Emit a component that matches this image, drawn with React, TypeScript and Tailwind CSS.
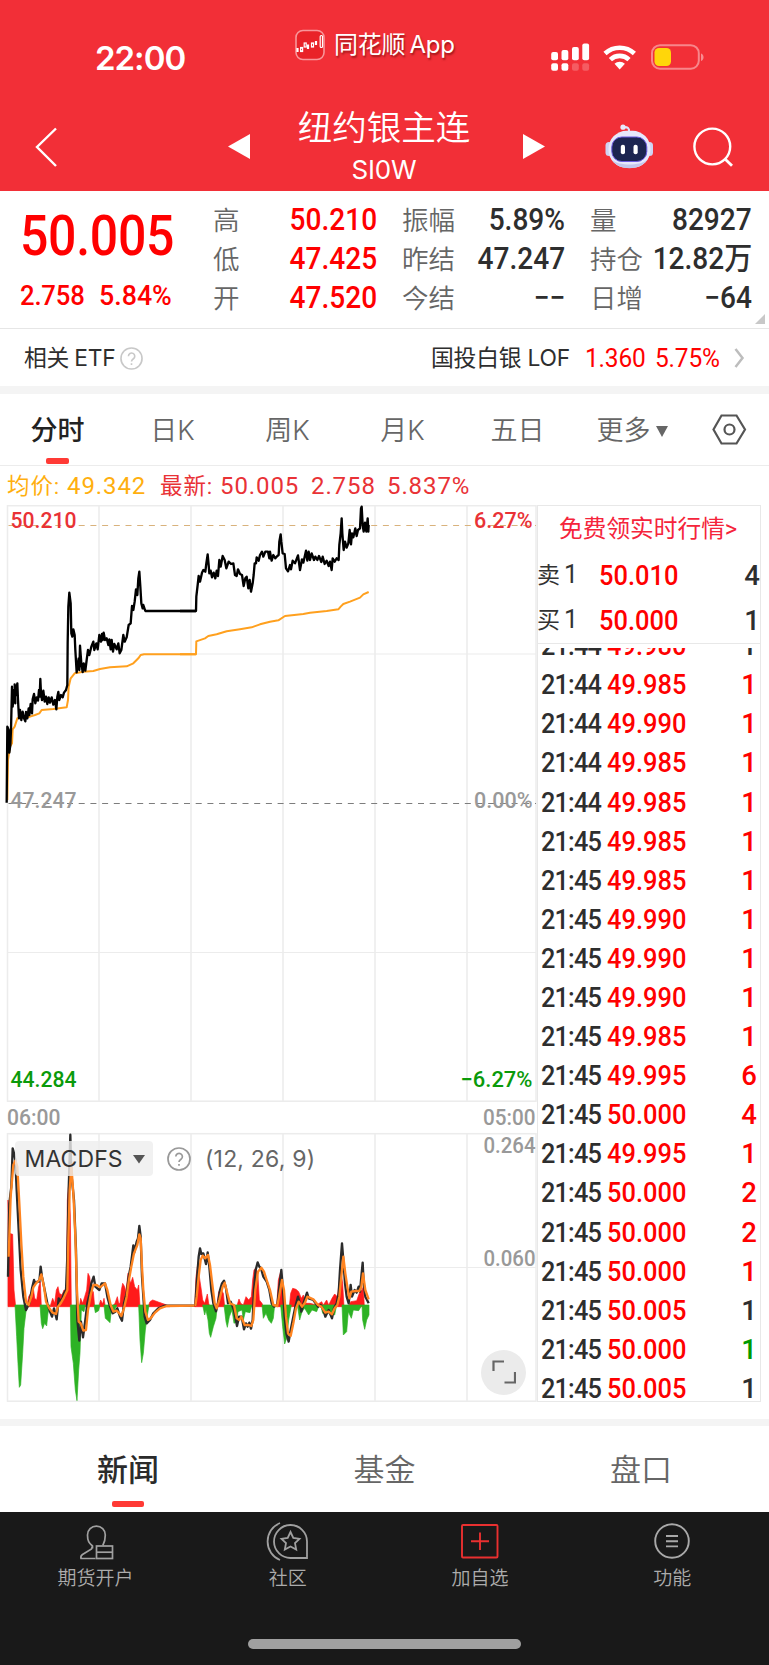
import React from "react";

const num = "font-['Roboto','Noto_Sans_CJK_SC',sans-serif]";

const stats = [
  [["高", "50.210", "red"], ["振幅", "5.89%", ""], ["量", "82927", ""]],
  [["低", "47.425", "red"], ["昨结", "47.247", ""], ["持仓", "12.82万", ""]],
  [["开", "47.520", "red"], ["今结", "−−", ""], ["日增", "−64", ""]],
];

const trades: [string, string, string, string][] = [
  ["21:44", "49.985", "1", "r"],
  ["21:44", "49.990", "1", "r"],
  ["21:44", "49.985", "1", "r"],
  ["21:44", "49.985", "1", "r"],
  ["21:45", "49.985", "1", "r"],
  ["21:45", "49.985", "1", "r"],
  ["21:45", "49.990", "1", "r"],
  ["21:45", "49.990", "1", "r"],
  ["21:45", "49.990", "1", "r"],
  ["21:45", "49.985", "1", "r"],
  ["21:45", "49.995", "6", "r"],
  ["21:45", "50.000", "4", "r"],
  ["21:45", "49.995", "1", "r"],
  ["21:45", "50.000", "2", "r"],
  ["21:45", "50.000", "2", "r"],
  ["21:45", "50.000", "1", "r"],
  ["21:45", "50.005", "1", "k"],
  ["21:45", "50.000", "1", "g"],
  ["21:45", "50.005", "1", "k"],
];

const priceA =
  "20,908 22,680 26,690 28,758 31,735 33,690 36,560 38,620 42,570 46,610 44,553 48,585 52,550 54,600 57,655 60,630 64,660 68,635 72,655 76,664 78,636 82,655 86,625 88,645 92,612 96,640 98,598 102,582 106,610 110,592 114,602 117,570 119,590 121,537 123,580 126,600 130,572 134,605 138,590 142,612 146,592 150,608 155,592 160,614 165,600 169,628 172,590 175,576 178,600 183,585 188,592 192,578 198,570 202,555 203,430 205,320 208,278 212,310 214,400 217,410 220,388 224,405 226,450 230,517 236,475 238,510 240,437 244,490 248,516 251,490 256,512 260,480 264,450 268,465 274,440 280,425 283,450 289,430 293,448 298,405 303,425 306,402 308,420 311,398 315,420 320,415 325,435 328,418 332,448 335,420 339,455 343,432 350,448 355,430 359,460 364,450 370,405 374,425 380,412 386,375 392,370 396,318 400,330 404,305 408,268 412,285 415,235 418,215 421,260 424,310 428,325 430,315 436,333 588,333";
const priceB =
  "0,333 48,333 49,290 53,255 56,228 60,245 66,218 70,210 76,215 79,190 83,163 86,195 88,220 92,212 96,232 101,218 106,235 110,212 114,228 118,180 122,200 128,168 134,180 139,205 146,185 153,192 160,190 165,225 170,228 174,208 180,222 186,225 191,258 196,235 200,230 205,265 209,240 213,275 218,250 221,225 224,190 228,190 230,172 236,182 240,165 246,155 250,170 256,155 264,155 268,175 270,155 275,182 280,165 286,175 292,168 296,165 298,125 302,103 304,125 308,160 314,162 318,205 324,214 330,195 333,208 338,182 345,190 354,166 360,210 366,178 370,188 378,152 382,182 386,155 390,180 395,160 402,180 406,170 412,180 417,168 424,186 428,170 434,192 440,182 446,198 450,185 455,210 458,175 464,185 470,175 476,180 478,135 482,100 485,55 487,100 491,150 495,125 500,143 505,130 509,90 513,133 516,100 520,112 526,85 530,108 534,90 540,85 543,25 545,20 548,75 551,95 555,68 559,95 563,55 565,95 566,75";
const avgA =
  "22,900 24,780 30,740 36,730 38,688 44,680 52,655 90,650 105,645 118,640 125,630 160,627 200,622 204,600 206,560 212,535 224,520 250,515 280,513 300,507 330,502 380,499 400,490 415,475 422,465 432,463 588,463";
const avgB =
  "0,463 48,463 49,424 75,415 85,408 110,403 140,394 180,388 215,382 240,373 270,365 295,361 315,348 370,342 390,338 440,333 475,328 482,320 490,312 510,305 540,293 550,283 566,276";
const difA =
  "24,560 28,340 34,290 38,175 42,190 46,210 50,300 56,420 62,540 70,620 78,660 88,640 96,595 102,570 106,580 112,575 118,575 122,530 126,560 134,600 142,640 150,665 156,680 162,655 170,688 176,625 184,635 192,610 198,600 202,500 206,300 211,134 214,250 222,330 228,480 232,690 238,752 243,695 249,742 256,690 262,640 268,615 274,580 281,560 286,590 292,595 298,600 305,580 315,580 322,620 330,650 338,670 346,665 352,655 360,680 366,692 372,640 380,610 386,560 392,530 400,466 402,490 410,455 414,445 418,408 422,440 426,560 430,620 434,680 440,700 450,690 460,670 475,655 495,647 586,647";
const deaA =
  "26,500 32,320 40,225 46,212 52,230 58,340 64,460 70,560 78,635 86,645 94,620 100,592 108,580 118,570 124,553 132,590 138,635 148,655 158,668 168,672 174,650 182,640 192,622 202,600 205,450 209,300 214,225 220,310 226,440 231,600 236,695 242,700 250,722 258,720 264,660 272,615 280,585 290,585 300,592 315,580 322,600 332,645 340,665 350,662 358,670 364,678 372,655 380,620 386,575 394,530 402,490 412,465 418,433 422,445 426,530 430,600 436,665 444,690 452,685 465,668 480,655 500,648 586,647";
const difB =
  "16,648 20,580 26,500 30,475 34,492 40,490 48,522 53,487 58,530 64,600 70,640 78,664 84,640 90,600 96,580 102,572 108,595 114,640 122,635 132,660 141,708 147,680 155,680 162,718 168,700 173,710 178,698 183,716 188,690 192,600 197,540 203,517 208,530 213,535 220,560 230,575 238,600 245,640 252,650 262,645 268,590 274,540 279,600 284,680 289,730 296,755 302,720 308,690 316,650 324,620 328,635 334,665 342,635 351,608 356,625 370,630 384,650 392,645 400,660 406,680 416,660 426,685 432,655 440,640 446,610 450,540 456,460 460,510 465,580 470,620 476,640 482,585 486,620 494,600 500,608 506,590 510,605 514,560 518,518 521,580 526,620 530,628 536,640";
const deaB =
  "16,648 20,620 26,560 32,510 38,497 46,505 54,495 60,525 66,575 74,640 80,655 88,630 98,590 104,578 112,610 120,640 132,645 140,685 148,690 154,680 164,705 176,705 184,708 190,690 196,600 204,545 214,533 222,545 230,570 240,600 250,645 262,648 268,615 276,570 282,600 288,680 294,730 302,738 310,700 318,655 326,635 336,650 344,640 352,620 370,628 384,645 394,650 406,668 416,665 426,673 434,655 442,645 448,620 454,560 460,500 466,550 472,590 478,625 484,605 496,603 508,603 514,590 519,550 526,600 536,628";
const redA =
  "M24 650V330L28 430 38 433 42 600 47 650ZM80 650L86 620 92 610 96 625 100 595 104 625 110 630 116 590 121 575 124 650ZM150 650L158 625 164 640 169 600 174 590 178 610 186 615 192 600 199 600 202 330 206 280 211 375 214 650ZM238 650L242 625 248 640 254 620 260 600 264 550 269 560 274 600 280 605 284 650ZM296 650L302 630 308 642 312 625 316 650ZM335 650L345 640 352 620 356 640 360 640 364 600 368 580 374 590 378 605 384 550 392 580 398 562 404 590 412 600 416 585 420 650ZM444 650L450 635 458 630 475 636 500 645 510 650Z";
const redB =
  "M14 650L18 560 22 530 28 560 34 600 38 630 44 640 52 612 56 640 60 650ZM80 650L86 605 94 600 100 610 104 650ZM140 650L147 627 152 640 160 645 168 620 176 630 184 620 188 570 192 540 198 533 204 560 208 630 216 640 220 650ZM260 650L265 570 272 545 278 600 282 650ZM298 650L302 610 308 595 318 598 326 605 334 625 340 615 348 640 360 640 380 645 395 635 400 645 410 630 416 645 426 625 434 612 442 620 446 590 452 540 458 580 462 650ZM476 650L482 635 500 632 508 610 516 600 520 590 523 650Z";
const greenA =
  "M45 645L50 740 54 820 58 892 62 885 68 790 72 715 78 665 86 645ZM120 645L124 700 128 716 134 700 140 708 144 670 150 645ZM211 645L213 770 220 820 226 900 231 932 236 840 240 790 244 660 252 665 256 645ZM282 645L286 668 296 662 300 645ZM312 645L316 685 322 690 330 698 334 660 342 665 350 645ZM416 645L420 750 425 818 430 790 436 720 440 690 447 645Z";
const greenB =
  "M38 645L44 675 48 660 54 690 58 730 62 742 70 710 78 685 82 645ZM102 645L108 695 112 712 118 680 126 660 132 700 140 695 144 665 156 660 160 690 166 665 180 668 186 645ZM216 645L220 685 228 670 236 690 244 700 250 685 254 645ZM272 645L278 710 284 762 290 745 296 690 304 645ZM322 645L329 690 336 665 344 655 356 675 366 660 380 665 388 645ZM392 645L398 670 412 670 422 668 434 675 440 645ZM456 645L460 735 470 725 475 665 484 685 490 660 506 662 516 645 518 690 524 718 530 690 537 675 537 645Z";

function StatusBar() {
  return (
    <div className="flex h-[100px] items-start text-white">
      <div className="w-[295px] pl-[95px] pt-[38.500px] font-['Inter'] text-[33px] leading-[38px] font-semibold tracking-[-1px]">22:00</div>
      <div className="flex w-[256px] items-center gap-[9px] pt-[28px]">
        <svg width="30" height="32" viewBox="0 0 30 32" fill="none">
          <rect x="1" y="1.5" width="28" height="29" rx="7" stroke="#f8969a" strokeWidth="1.6" fill="#e92228" />
          <g stroke="#fff" strokeWidth="1.200">
            <path d="M2.500 19v4M13 15.500v4.500M21 12v4" strokeWidth="2.200" />
            <rect x="5.600" y="18.500" width="2" height="4" />
            <rect x="9.200" y="14" width="2" height="4" />
            <rect x="16.500" y="14" width="2" height="4" />
            <rect x="25.200" y="6.500" width="2.300" height="12" rx="1" />
          </g>
        </svg>
        <span className="pt-[1px] font-['Inter','Noto_Sans_CJK_SC',sans-serif] text-[24px] leading-[32px] tracking-[-0.200px] whitespace-nowrap [text-shadow:1px_2px_2px_rgba(90,0,0,.55)]">
          同花顺<span className="pl-[4px]">App</span>
        </span>
      </div>
      <svg width="160" height="30" viewBox="551 43 160 30" className="mt-[43px]" fill="#fff">
        <rect x="551.2" y="52" width="6.800" height="8.200" rx="2" />
        <rect x="561.500" y="50" width="6.800" height="10.200" rx="2" />
        <rect x="572" y="47" width="6.800" height="13.200" rx="2" />
        <rect x="582.300" y="43.500" width="6.800" height="16.700" rx="2" />
        <rect x="551.2" y="63.200" width="6.800" height="7.500" rx="2" />
        <rect x="561.500" y="63.200" width="6.800" height="7.500" rx="2" />
        <rect x="572" y="63.200" width="6.800" height="7.500" rx="2" opacity=".22" />
        <rect x="582.300" y="63.200" width="6.800" height="7.500" rx="2" opacity=".22" />
        <g fill="none" stroke="#fff" strokeWidth="4.6">
          <path d="M605 53.5a21.5 21.5 0 0 1 29.4 0" />
          <path d="M610.400 59.6a13.5 13.5 0 0 1 18.6 0" />
        </g>
        <path d="M614.500 63.800a7.6 7.6 0 0 1 10.4 0L619.700 69.500Z" />
        <rect x="652" y="45.200" width="46.800" height="23.500" rx="8" fill="none" stroke="#fff" strokeOpacity=".42" strokeWidth="2" />
        <rect x="654.500" y="48" width="16.500" height="18" rx="4.5" fill="#ffd60a" />
        <path d="M701 53.5c3.400 1 3.400 6.500 0 7.500Z" opacity=".45" />
      </svg>
    </div>
  );
}

function TitleBar() {
  return (
    <div className="flex h-[91px] items-start text-white">
      <svg width="228" height="91" viewBox="0 100 228 91" fill="none" stroke="#fff" strokeWidth="2.4">
        <path d="M56 128.500L37 147l19 19" />
      </svg>
      <svg width="22" height="26" viewBox="0 0 22 26" className="mt-[34px]" fill="#fff">
        <path d="M22 0v25L0 12.500Z" />
      </svg>
      <div className="flex w-[273px] flex-col items-center pr-[5px] font-['Noto_Sans_CJK_SC',sans-serif]">
        <div className="mt-[5px] h-[40px] text-[34.500px] leading-[40px] font-[350]">纽约银主连</div>
        <div className="mt-[9px] font-['Inter'] text-[26px] leading-[32px] tracking-[-0.2px]">SI0W</div>
      </div>
      <svg width="22" height="26" viewBox="0 0 22 26" className="mt-[34px]" fill="#fff">
        <path d="M0 0v25L22 12.500Z" />
      </svg>
      <svg width="200" height="80" viewBox="545 100 200 80" fill="none">
        <path d="M629 132c.5-4-1.500-5-5-4.800" stroke="#dfe3fb" strokeWidth="2.200" strokeLinecap="round" />
        <circle cx="623" cy="127.200" r="2.600" fill="#e8eafc" />
        <rect x="605.500" y="142" width="7" height="14" rx="3.500" fill="#cfd3f3" />
        <rect x="646" y="142" width="7" height="14" rx="3.500" fill="#cfd3f3" />
        <rect x="608.500" y="130.800" width="42" height="37" rx="18" fill="#e6e8fb" />
        <path d="M612 160c7 11 28 11 35 0-7 6-28 6-35 0Z" fill="#c3c7ec" />
        <rect x="611.800" y="137" width="35" height="24.500" rx="10" fill="#1c2550" stroke="#6a5ae0" strokeWidth="1" />
        <rect x="620.800" y="144.800" width="4.200" height="9.500" rx="2" fill="#fff" />
        <rect x="633.500" y="144.800" width="4.200" height="9.500" rx="2" fill="#fff" />
        <circle cx="712.300" cy="146.500" r="17.900" stroke="#fff" strokeWidth="2.400" />
        <path d="M725 159l7 6.800" stroke="#fff" strokeWidth="2.800" />
      </svg>
    </div>
  );
}

function Quote() {
  return (
    <div className="flex h-[138px] border-b border-[#e6e6e6]">
      <div className={`${num} w-[213px] pl-[20px] font-medium text-[#ff0000]`}>
        <div className="w-[180px] origin-left scale-x-[0.900] pt-[18px] text-[55.500px] leading-[56px] tracking-[-0.300px]">50.005</div>
        <div className="mt-[14px] flex text-[28.500px] leading-[34px]">
          <span className="w-[79px] origin-left scale-x-[0.900] tracking-[-0.200px]">2.758</span>
          <span className="origin-left scale-x-[0.940]">5.84%</span>
        </div>
      </div>
      <div className="relative flex flex-1 flex-col pt-[9px]">
        {stats.map((row, i) => (
          <div key={i} className="grid h-[39px] grid-cols-[164px_163px_162px] gap-[25px]">
            {row.map(([k, v, c]) => (
              <div key={k} className="flex items-center justify-between whitespace-nowrap">
                <span className="pb-[2px] font-['Noto_Sans_CJK_SC',sans-serif] text-[26.500px] leading-[38px] font-[350] text-[#666]">{k}</span>
                <span className={`${num} -ml-[10px] origin-right scale-x-[0.920] text-[30.500px] leading-[38px] font-medium ${c ? "text-[#ff0000]" : "text-[#2e2e2e]"}`}>{v}</span>
              </div>
            ))}
          </div>
        ))}
        <svg width="10" height="10" className="absolute right-[4px] bottom-[4px]" fill="#c8c8c8">
          <path d="M10 0v10H0Z" />
        </svg>
      </div>
    </div>
  );
}

function Help({ size, color }: { size: number; color: string }) {
  return (
    <svg width={size} height={size} viewBox="0 0 24 24" fill="none" stroke={color} strokeWidth="1.7">
      <circle cx="12" cy="12" r="11" />
      <path d="M8.800 9.600a3.300 3.300 0 1 1 5.200 2.700c-1.400 1-2 1.500-2 2.800M12 17v1.800" />
    </svg>
  );
}

function EtfRow() {
  return (
    <div className="flex h-[57px] items-center pt-[1px] pl-[24px] font-['Inter','Noto_Sans_CJK_SC',sans-serif] text-[22.800px] tracking-[-0.200px] whitespace-nowrap text-[#2e2e2e]">
      <span className="w-[96px]">相关<span className="pl-[5px]">ETF</span></span>
      <Help size={23} color="#c8c8c8" />
      <span className="ml-[288px] w-[154px]">国投白银<span className="pl-[6px]">LOF</span></span>
      <span className={`${num} w-[70px] origin-left scale-x-[0.960] text-[25.500px] text-[#ff0000]`}>1.360</span>
      <span className={`${num} w-[79px] origin-left scale-x-[0.960] text-[25.500px] text-[#ff0000]`}>5.75%</span>
      <svg width="12" height="22" fill="none" stroke="#bdbdbd" strokeWidth="2.500">
        <path d="M1.500 2l7 9-7 9" />
      </svg>
    </div>
  );
}

function PeriodTabs() {
  const tab = "flex w-[115px] items-center justify-center";
  return (
    <div className="relative flex h-[72px] items-center border-b border-[#ececec] pt-[4px] font-['Inter','Noto_Sans_CJK_SC',sans-serif] text-[27px] font-[350] text-[#666]">
      <div className={`${tab} font-medium text-[#222]`}>分时</div>
      <div className={tab}>日K</div>
      <div className={tab}>周K</div>
      <div className={tab}>月K</div>
      <div className={tab}>五日</div>
      <div className="flex w-[117px] items-center justify-center gap-[5px] pr-[3px]">
        更多
        <svg width="12" height="12" fill="#666"><path d="M0 0h12L6 11Z" /></svg>
      </div>
      <svg width="74" height="40" viewBox="692 410 74 40" className="-mt-[4px]" fill="none" stroke="#555" strokeWidth="2.200">
        <path d="M721.500 415.500h15L745 429.500l-8.500 14h-15L713.500 429.500Z" />
        <circle cx="729.500" cy="429.500" r="5" />
      </svg>
      <div className="absolute bottom-[1px] left-[46px] h-[6px] w-[23px] rounded-[2px] bg-[#ff3a35]" />
    </div>
  );
}

function Legend() {
  return (
    <div className="flex h-[39px] items-center pt-[1px] pl-[7px] font-['Roboto','Noto_Sans_CJK_SC',sans-serif] text-[24px] tracking-[0.9px] whitespace-nowrap text-[#e93236]">
      <span className="w-[153px] text-[#ffaf0f]"><span className="text-[22.500px]">均价:</span> 49.342</span>
      <span className="w-[151px]"><span className="text-[22.500px]">最新:</span> 50.005</span>
      <span className="w-[76px]">2.758</span>
      <span>5.837%</span>
    </div>
  );
}

const Lbl = ({ x, y, w, c, children, s = 22.5, wt = 500 }: { x: number; y: number; w: number; c: string; children: string; s?: number; wt?: number }) => (
  <text x={x} y={y} textLength={w} lengthAdjust="spacingAndGlyphs" fontSize={s} fontWeight={wt} fill={c} fontFamily="Roboto, sans-serif">{children}</text>
);

function Charts() {
  return (
    <div className="relative w-[537px]">
      <svg width="537" height="898" viewBox="0 505 537 898" fill="none">
        <g stroke="#ececec" strokeWidth="1.500">
          <rect x="7.500" y="505.700" width="528.500" height="595.500" />
          <rect x="7.500" y="1133.700" width="528.500" height="267.500" />
          {[99, 191, 283, 375, 467].map((x) => (
            <path key={x} d={`M${x} 506V1101M${x} 1134V1401`} />
          ))}
          <path d="M8 654H536M8 952.500H536M8 1267.500H536" strokeWidth="1.200" />
        </g>
        <path d="M8.500 525.500H536" stroke="#d9b27c" strokeWidth="1" strokeDasharray="6 5.700" />
        <path d="M8.500 803.500H536" stroke="#7d7d7d" strokeWidth="1" strokeDasharray="6 5.700" />
        <Lbl x={10.500} y={527.500} w={66} c="#e93236">50.210</Lbl>
        <Lbl x={474} y={527.500} w={58.500} c="#e93236">6.27%</Lbl>
        <Lbl x={10.500} y={807.500} w={66} c="#999">47.247</Lbl>
        <Lbl x={474} y={807.500} w={58.500} c="#999">0.00%</Lbl>
        <Lbl x={10.500} y={1087} w={66} c="#0a9a0a">44.284</Lbl>
        <Lbl x={460.500} y={1087} w={72} c="#0a9a0a">−6.27%</Lbl>
        <Lbl x={7} y={1124.500} w={53.500} c="#999">06:00</Lbl>
        <Lbl x={483} y={1124.500} w={52.500} c="#999">05:00</Lbl>
        <Lbl x={483.500} y={1153} w={52} c="#999">0.264</Lbl>
        <Lbl x={483.500} y={1265.800} w={52} c="#999">0.060</Lbl>
        <g transform="translate(0 500) scale(.33333)" strokeLinejoin="round">
          <polyline points={avgA} stroke="#ffa01e" strokeWidth="6" />
          <polyline points={priceA} stroke="#000" strokeWidth="7" />
          <g transform="translate(540 0)">
            <polyline points={avgB} stroke="#ffa01e" strokeWidth="6" />
            <polyline points={priceB} stroke="#000" strokeWidth="7" />
          </g>
        </g>
        <g transform="translate(0 1090) scale(.33333)" strokeLinejoin="round">
          <path d={redA} fill="#ff1a1a" stroke="#ff1a1a" strokeWidth="2" />
          <path d={greenA} fill="#2db224" stroke="#2db224" strokeWidth="2" />
          <polyline points={difA} stroke="#2b2b2b" strokeWidth="7" />
          <polyline points={deaA} stroke="#ff8420" strokeWidth="7" />
          <g transform="translate(570 0)">
            <path d={redB} fill="#ff1a1a" stroke="#ff1a1a" strokeWidth="2" />
            <path d={greenB} fill="#2db224" stroke="#2db224" strokeWidth="2" />
            <polyline points={difB} stroke="#2b2b2b" strokeWidth="7" />
            <polyline points={deaB} stroke="#ff8420" strokeWidth="7" />
          </g>
        </g>
      </svg>
      <div className="absolute top-[636px] left-[15px] flex items-center font-['Inter'] text-[23px] whitespace-nowrap">
        <div className="flex h-[35px] w-[138px] items-center gap-[11px] rounded-[4px] bg-[#eeeeee]/80 pt-[1px] pl-[9.500px] text-[#333]">
          <span className="w-[97px] tracking-[0.1px]">MACDFS</span>
          <svg width="12" height="9" fill="#555"><path d="M0 0h12L6 8.500Z" /></svg>
        </div>
        <span className="ml-[14px]"><Help size={24} color="#999" /></span>
        <span className="ml-[14px] pt-[1px] tracking-[0.2px] text-[#666]">(12, 26, 9)</span>
      </div>
      <div className="absolute top-[844.500px] left-[481px] flex size-[45px] items-center justify-center rounded-full bg-[#ebebeb]">
        <svg width="24" height="24" fill="none" stroke="#666" strokeWidth="2.200">
          <path d="M1.500 11V1.500H12M23 12v10.500H12.500" />
        </svg>
      </div>
    </div>
  );
}

function Row({ t, p, q, c }: { t: string; p: string; q: string; c: string }) {
  const color = c === "r" ? "text-[#ff0000]" : c === "g" ? "text-[#009a00]" : "text-[#2e2e2e]";
  return (
    <div className="flex h-[39.1px] shrink-0 items-center pl-[2.500px] text-[27.500px] leading-[39px] font-medium">
      <span className="w-[66px] origin-left scale-x-[0.920] tracking-[-0.900px] text-[#2e2e2e]">{t}</span>
      <span className="w-[90px] origin-left scale-x-[0.925] text-[#ff0000]">{p}</span>
      <span className={`flex-1 pr-[3px] text-right ${color}`}>{q}</span>
    </div>
  );
}

function OrderPanel() {
  return (
    <div className={`${num} flex h-[897px] w-[224px] flex-col border-[1.500px] border-[#e8e8e8]`}>
      <div className="flex h-[47px] items-center pl-[21px] text-[23.700px] whitespace-nowrap text-[#f5243b]">免费领实时行情&gt;</div>
      {[["卖", "50.010", "4"], ["买", "50.000", "1"]].map(([a, b, c]) => (
        <div key={a} className="flex h-[45px] items-center text-[27.500px] font-medium">
          <span className="-ml-[1px] w-[62px] text-[23px] leading-[30px] font-normal text-[#333]">{a}<span className="pl-[4px] text-[25px]">1</span></span>
          <span className="origin-left scale-x-[0.925] text-[#ff0000]">{b}</span>
          <span className="flex-1 text-right text-[#2e2e2e]">{c}</span>
        </div>
      ))}
      <div className="h-[5px] shrink-0 border-t-[1.500px] border-[#e8e8e8]" />
      <div className="flex min-h-0 flex-1 flex-col justify-end overflow-hidden">
        <div className="-mb-[7px]">
          <Row t="21:44" p="49.980" q="1" c="k" />
          {trades.map(([t, p, q, c], i) => (
            <Row key={i} t={t} p={p} q={q} c={c} />
          ))}
        </div>
      </div>
    </div>
  );
}

function NewsTabs() {
  return (
    <div className="relative flex h-[86px] items-center pb-[1px] font-['Noto_Sans_CJK_SC',sans-serif] text-[31px] font-[350] text-[#666]">
      <div className="w-[256px] text-center font-medium text-[#2b2b2b]">新闻</div>
      <div className="w-[257px] text-center">基金</div>
      <div className="w-[256px] text-center">盘口</div>
      <div className="absolute bottom-[5px] left-[112px] h-[6px] w-[32px] rounded-[2px] bg-[#ff3a35]" />
    </div>
  );
}

function Footer() {
  const item = "flex w-[192.250px] flex-col items-center gap-[2px]";
  return (
    <div className="flex h-[153px] flex-col items-center bg-[#191919] font-['Noto_Sans_CJK_SC',sans-serif] text-[19px] leading-[28px] font-[350] text-[#acacac]">
      <div className="-ml-[1px] flex h-[127px] w-full pt-[9px]">
        <div className={item}>
          <svg width="40" height="40" fill="none" stroke="#a0a0a0" strokeWidth="1.700">
            <path d="M17.500 27.500V25c-3.500-3-5-5-5-11a8.900 8.900 0 0 1 17.800 0c0 4-.5 7-2.500 10.500M17.500 25l-1 3-9 5.500c-1.500 1-2 2-1.500 4H20.500" transform="translate(-1 0)" />
            <rect x="20.500" y="25" width="16" height="12.500" />
            <path d="M20.500 31.200h16" />
          </svg>
          期货开户
        </div>
        <div className={item}>
          <svg width="44" height="40" fill="none" stroke="#a0a0a0" strokeWidth="1.800">
            <path d="M41 37H25a16.500 16.500 0 1 1 16-16.500Z" />
            <path d="M14 2a20 20 0 0 0 0 37" />
            <path d="M24.500 11l2.800 6 6.200.8-4.500 4.300 1.200 6.400-5.700-3.100-5.700 3.100 1.200-6.400-4.500-4.300 6.200-.8Z" />
          </svg>
          社区
        </div>
        <div className={item}>
          <svg width="40" height="40" fill="none" stroke="#e93030" strokeWidth="1.900">
            <rect x="2" y="4" width="35.500" height="32.500" rx="1" />
            <path d="M20 11.500v17.500M11 20.200h18" />
          </svg>
          加自选
        </div>
        <div className={item}>
          <svg width="40" height="40" fill="none" stroke="#a9a9a9" strokeWidth="1.900">
            <circle cx="20" cy="20" r="16.800" />
            <path d="M14 15h12M14 20.200h12M14 25.400h12" />
          </svg>
          功能
        </div>
      </div>
      <div className="h-[10px] w-[273px] rounded-full bg-[#a0a0a0]" />
    </div>
  );
}

export default function App() {
  return (
    <div className="h-[1665px] w-[769px] overflow-hidden bg-white">
      <div className="h-[191px] bg-[#f22f37]">
        <StatusBar />
        <TitleBar />
      </div>
      <Quote />
      <EtfRow />
      <div className="h-[8px] bg-[#f4f4f4]" />
      <PeriodTabs />
      <Legend />
      <div className="flex h-[914px]">
        <Charts />
        <OrderPanel />
      </div>
      <div className="h-[7px] bg-[#f4f4f4]" />
      <NewsTabs />
      <Footer />
    </div>
  );
}
